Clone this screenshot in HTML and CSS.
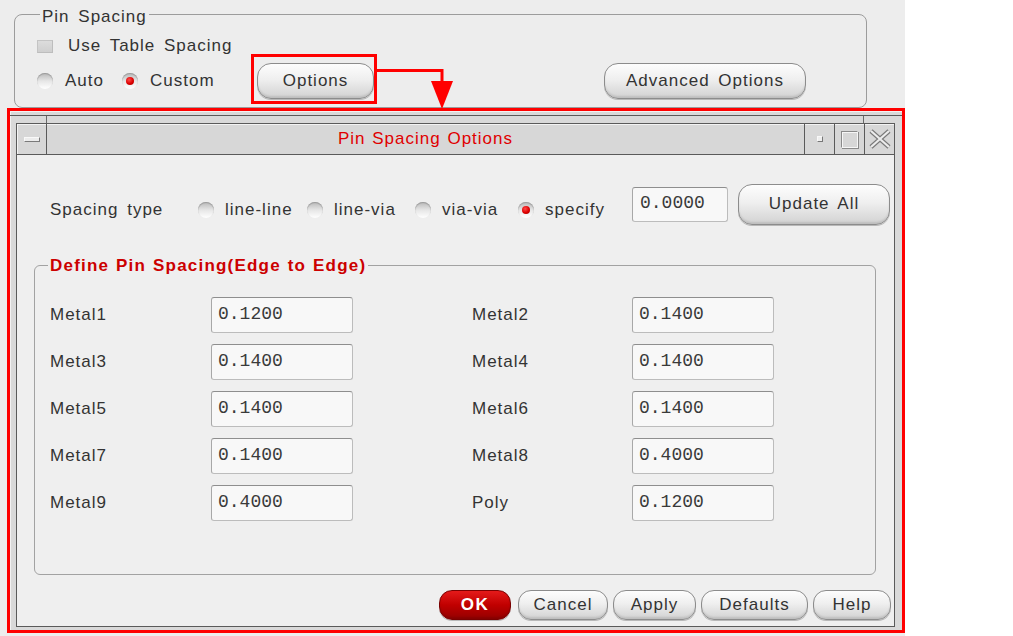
FILE: index.html
```html
<!DOCTYPE html>
<html>
<head>
<meta charset="utf-8">
<title>Pin Spacing Options</title>
<link rel="stylesheet" href="styles.css">
</head>
<body>
<div class="screen">
  <fieldset class="pin-group">
    <legend class="pin-legend">Pin Spacing</legend>
    <div class="row-check"><span class="check"></span><span>Use Table Spacing</span></div>
    <div class="row-mode">
      <span class="opt opt-auto"><span class="radio"></span><span>Auto</span></span>
      <span class="opt opt-custom"><span class="radio on"></span><span>Custom</span></span>
      <button class="btn btn-options">Options</button>
      <button class="btn btn-adv">Advanced Options</button>
    </div>
  </fieldset>

  <div class="dialog">
    <div class="frame">
      <div class="frame-top"><span class="ft-left"></span><span class="ft-mid"></span><span class="ft-right"></span></div>
      <div class="win">
        <div class="titlebar">
          <div class="tb-menu"><span class="tb-bar"></span></div>
          <div class="tb-title">Pin Spacing Options</div>
          <div class="tb-btn"><span class="ico-min"></span></div>
          <div class="tb-btn"><span class="ico-max"></span></div>
          <div class="tb-btn">
            <svg class="ico-close" width="24" height="20" viewBox="0 0 24 20">
              <path d="M3 2 L21 18 M21 2 L3 18" stroke="#7a7a7a" stroke-width="4.5" fill="none"/>
              <path d="M3 2 L21 18 M21 2 L3 18" stroke="#ececec" stroke-width="2.2" fill="none"/>
            </svg>
          </div>
        </div>
        <div class="client">
          <div class="type-row">
            <span class="type-label">Spacing type</span>
            <span class="topt t1"><span class="radio"></span><span>line-line</span></span>
            <span class="topt t2"><span class="radio"></span><span>line-via</span></span>
            <span class="topt t3"><span class="radio"></span><span>via-via</span></span>
            <span class="topt t4"><span class="radio on"></span><span>specify</span></span>
            <div class="field field-sm">0.0000</div>
            <button class="btn btn-update">Update All</button>
          </div>

          <fieldset class="def-group">
            <legend class="def-legend">Define Pin Spacing(Edge to Edge)</legend>
            <div class="metal-grid">
              <span>Metal1</span><div class="field field-lg">0.1200</div>
              <span>Metal2</span><div class="field field-lg">0.1400</div>
              <span>Metal3</span><div class="field field-lg">0.1400</div>
              <span>Metal4</span><div class="field field-lg">0.1400</div>
              <span>Metal5</span><div class="field field-lg">0.1400</div>
              <span>Metal6</span><div class="field field-lg">0.1400</div>
              <span>Metal7</span><div class="field field-lg">0.1400</div>
              <span>Metal8</span><div class="field field-lg">0.4000</div>
              <span>Metal9</span><div class="field field-lg">0.4000</div>
              <span>Poly</span><div class="field field-lg">0.1200</div>
            </div>
          </fieldset>

          <div class="actions">
            <button class="btn btn-sm btn-ok">OK</button>
            <button class="btn btn-sm btn-cancel">Cancel</button>
            <button class="btn btn-sm btn-apply">Apply</button>
            <button class="btn btn-sm btn-defaults">Defaults</button>
            <button class="btn btn-sm btn-help">Help</button>
          </div>
        </div>
      </div>
    </div>
  </div>

  <div class="callout"></div>
  <svg class="arrow" width="80" height="44" viewBox="0 0 80 44">
    <path d="M0 4.5 H66 V18" stroke="#ff0000" stroke-width="3" fill="none"/>
    <polygon points="55,15 77,15 66,43" fill="#ff0000"/>
  </svg>
</div>
</body>
</html>
```

FILE: styles.css
```css
* { box-sizing: border-box; }

html, body {
  margin: 0;
  background: #ffffff;
}

body {
  font-family: "Liberation Sans", Arial, sans-serif;
  font-size: 17px;
  color: #333333;
  letter-spacing: 1px;
  word-spacing: 3px;
}

.screen {
  position: relative;
  width: 905px;
  height: 636px;
  background: #ededed;
  overflow: hidden;
  padding-top: 1px;
}

/* ---------- top group ---------- */
.pin-group {
  margin: 0 0 0 14px;
  width: 853px;
  height: 107px;
  min-width: 0;
  border: 1px solid #9c9c9c;
  border-radius: 8px;
  padding: 7px 60px 0 22px;
}

.pin-legend {
  margin-left: 3px;
  padding: 6px 2px 0;
  line-height: 20px;
}

.row-check {
  display: flex;
  align-items: center;
  height: 24px;
}

.check {
  width: 16px;
  height: 13px;
  margin-right: 15px;
  background: linear-gradient(#dcdcdc, #cfcfcf);
  border: 1px solid;
  border-color: #c4c4c4 #bdbdbd #bdbdbd #c4c4c4;
}

.row-mode {
  display: flex;
  align-items: center;
  height: 36px;
  margin-top: 5px;
}

.opt {
  display: flex;
  align-items: center;
  gap: 12px;
}
.opt-auto { width: 85px; }
.opt-custom { width: 135px; }

.radio {
  position: relative;
  flex: none;
  width: 16px;
  height: 16px;
  border-radius: 50%;
  background: linear-gradient(#b8b8b8, #e6e6e6 50%, #ffffff);
  box-shadow: inset 0 1px 1px #9a9a9a;
}

.radio.on::after {
  content: "";
  position: absolute;
  left: 4px;
  top: 4px;
  width: 8px;
  height: 8px;
  border-radius: 50%;
  background: radial-gradient(circle at 40% 35%, #ff4a4a, #dd0000 55%, #980000);
}

/* ---------- buttons ---------- */
.btn {
  font: inherit;
  letter-spacing: inherit;
  word-spacing: inherit;
  color: #333333;
  padding: 0;
  height: 36px;
  border: 1px solid #8c8c8c;
  border-radius: 14px;
  background: linear-gradient(#fdfdfd, #efefef 45%, #d2d2d2);
  box-shadow: inset 0 -2px 2px rgba(0, 0, 0, 0.10), 0 1px 0 #b8b8b8;
}

.btn-options { width: 117px; }
.btn-adv { width: 202px; margin-left: auto; }

/* ---------- dialog window ---------- */
.dialog {
  margin-left: 7px;
  width: 898px;
  height: 525px;
  border: 3px solid #ff0000;
}

.frame {
  height: 100%;
  display: flex;
  flex-direction: column;
  padding: 4px 7px 3px 6px;
  background: #d9d9d9;
  box-shadow: inset 1px 1px 0 #f2f2f2;
}

.frame-top {
  display: flex;
  height: 8px;
  margin: 0 -7px 0 -6px;
  padding: 0 7px 0 6px;
  border-top: 1px solid #5a5a5a;
}
.ft-left { width: 30px; }
.ft-mid {
  flex: 1;
  border-left: 1px solid #6a6a6a;
  border-right: 1px solid #6a6a6a;
}
.ft-right { width: 31px; }

.win {
  flex: 1;
  display: flex;
  flex-direction: column;
  border: 1px solid #5a5a5a;
}

.titlebar {
  display: flex;
  height: 31px;
  border-bottom: 1px solid #5a5a5a;
  background: #d7d7d7;
  box-shadow: inset 1px 1px 0 #f3f3f3;
}

.tb-menu {
  width: 30px;
  border-right: 1px solid #5a5a5a;
  display: flex;
  align-items: center;
  justify-content: center;
}

.tb-bar {
  width: 16px;
  height: 5px;
  background: #ececec;
  border: 1px solid;
  border-color: #f8f8f8 #7a7a7a #7a7a7a #f8f8f8;
}

.tb-title {
  flex: 1;
  text-align: center;
  line-height: 30px;
  color: #e00000;
  word-spacing: 1px;
}

.tb-btn {
  width: 30px;
  border-left: 1px solid #5a5a5a;
  display: flex;
  align-items: center;
  justify-content: center;
}

.ico-min {
  width: 6px;
  height: 6px;
  background: #eeeeee;
  border: 1px solid;
  border-color: #f8f8f8 #777777 #777777 #f8f8f8;
}

.ico-max {
  width: 17px;
  height: 17px;
  border: 1px solid;
  border-color: #8a8a8a #f6f6f6 #f6f6f6 #8a8a8a;
  box-shadow: 1px 1px 0 #8a8a8a, inset 1px 1px 0 #f6f6f6;
}

.client {
  flex: 1;
  display: flex;
  flex-direction: column;
  padding: 28px 3px 0 17px;
  background: #efefef;
}

/* spacing type row */
.type-row {
  display: flex;
  align-items: center;
  height: 42px;
  padding-left: 16px;
}

.type-label { width: 148px; margin-top: 12px; }

.topt {
  display: flex;
  align-items: center;
  gap: 11px;
  margin-top: 12px;
}
.t1 { width: 109px; }
.t2 { width: 108px; }
.t3 { width: 103px; }
.t4 { width: 114px; }

.field {
  display: flex;
  align-items: center;
  padding-left: 7px;
  padding-bottom: 3px;
  background: #f8f8f8;
  border: 1px solid #bcbcbc;
  border-top-color: #8e8e8e;
  border-left-color: #a8a8a8;
  border-radius: 3px;
  font-family: "Liberation Mono", "Courier New", monospace;
  font-size: 18px;
  letter-spacing: 0;
  word-spacing: 0;
  color: #3a3a3a;
}

.field-sm { width: 96px; height: 35px; }
.field-lg { width: 142px; height: 36px; padding-left: 6px; }

.btn-update {
  width: 152px;
  height: 41px;
  margin-left: 10px;
}

/* define pin spacing group */
.def-group {
  margin: 29px 0 0 0;
  width: 842px;
  height: 321px;
  min-width: 0;
  border: 1px solid #a2a2a2;
  border-radius: 6px;
  padding: 21px 0 0 15px;
}

.def-legend {
  margin-left: -2px;
  padding: 2px 2px 0;
  line-height: 20px;
  font-weight: bold;
  color: #cc0000;
  letter-spacing: 1.2px;
  word-spacing: 1px;
}

.metal-grid {
  display: grid;
  grid-template-columns: 161px 261px 160px 143px;
  grid-auto-rows: 36px;
  row-gap: 11px;
  align-items: center;
}

/* bottom buttons */
.actions {
  display: flex;
  justify-content: flex-end;
  gap: 5px;
  margin-top: 15px;
}

.btn-sm { height: 30px; border-radius: 13px; }
.btn-ok {
  width: 72px;
  margin-right: 2px;
  color: #ffffff;
  font-weight: bold;
  letter-spacing: 1.5px;
  border-color: #7a0000;
  background: linear-gradient(#e41a1a, #c00000 50%, #940000);
}
.btn-cancel { width: 90px; }
.btn-apply { width: 83px; }
.btn-defaults { width: 107px; }
.btn-help { width: 78px; }

/* ---------- annotation overlay ---------- */
.callout {
  position: absolute;
  left: 251px;
  top: 54px;
  width: 126px;
  height: 50px;
  border: 3px solid #ff0000;
}

.arrow {
  position: absolute;
  left: 376px;
  top: 66px;
}
```
